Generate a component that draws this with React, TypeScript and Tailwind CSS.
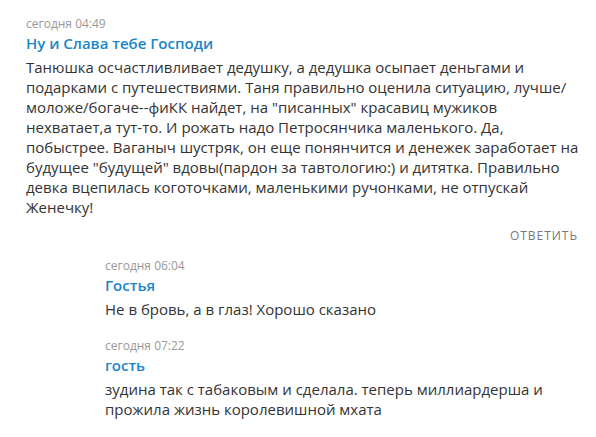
import * as React from 'react';

interface CommentProps {
  time: string;
  author: string;
  text: string;
  reply?: boolean;
}

function Comment({ time, author, text, reply }: CommentProps) {
  return (
    <div className={reply ? 'pl-[79px]' : ''}>
      <div className="mt-[1px] text-[12px] leading-[16px] text-[#999999]">{time}</div>
      <div className="mt-[1px] text-[15px] font-semibold leading-[20px] text-[#1a86c8]">{author}</div>
      <p className="mt-[4px] text-[15px] leading-[20px] text-[#333333]">{text}</p>
    </div>
  );
}

export default function App() {
  return (
    <div className="min-h-[437px] bg-white pl-[26px] pr-[14px] pt-[15px] font-['Open_Sans',sans-serif]">
      <Comment
        time="сегодня 04:49"
        author="Ну и Слава тебе Господи"
        text={'Танюшка осчастливливает дедушку, а дедушка осыпает деньгами и подарками с путешествиями. Таня правильно оценила ситуацию, лучше/моложе/богаче--фиКК найдет, на "писанных" красавиц мужиков нехватает,а тут-то. И рожать надо Петросянчика маленького. Да, побыстрее. Ваганыч шустряк, он еще понянчится и денежек заработает на будущее "будущей" вдовы(пардон за тавтологию:) и дитятка. Правильно девка вцепилась коготочками, маленькими ручонками, не отпускай Женечку!'}
      />
      <div className="mt-[10px] flex justify-end pr-[4px]">
        <button className="text-[12px] uppercase tracking-[0.08em] text-[#777777]">Ответить</button>
      </div>
      <div className="mt-[12px] flex flex-col gap-[18px] pr-[4px]">
        <Comment reply time="сегодня 06:04" author="Гостья" text="Не в бровь, а в глаз! Хорошо сказано" />
        <Comment
          reply
          time="сегодня 07:22"
          author="гость"
          text="зудина так с табаковым и сделала. теперь миллиардерша и прожила жизнь королевишной мхата"
        />
      </div>
    </div>
  );
}
